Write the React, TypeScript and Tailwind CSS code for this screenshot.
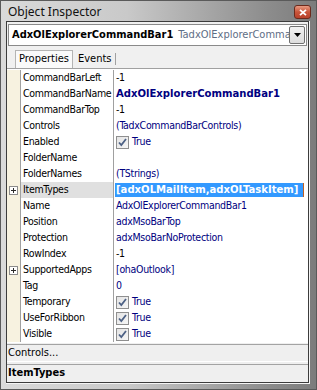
import React from "react";

type Row = {
  name: string;
  value?: string;
  color?: string;
  bold?: boolean;
  check?: boolean;
  plus?: boolean;
  selected?: boolean;
};

const NAVY = "#000080";

const rows: Row[] = [
  { name: "CommandBarLeft", value: "-1", color: "#000000" },
  { name: "CommandBarName", value: "AdxOlExplorerCommandBar1", color: NAVY, bold: true },
  { name: "CommandBarTop", value: "-1", color: "#000000" },
  { name: "Controls", value: "(TadxCommandBarControls)", color: NAVY },
  { name: "Enabled", check: true },
  { name: "FolderName", value: "" },
  { name: "FolderNames", value: "(TStrings)", color: NAVY },
  { name: "ItemTypes", value: "[adxOLMailItem,adxOLTaskItem]", plus: true, selected: true },
  { name: "Name", value: "AdxOlExplorerCommandBar1", color: NAVY },
  { name: "Position", value: "adxMsoBarTop", color: NAVY },
  { name: "Protection", value: "adxMsoBarNoProtection", color: NAVY },
  { name: "RowIndex", value: "-1", color: "#000000" },
  { name: "SupportedApps", value: "[ohaOutlook]", color: NAVY, plus: true },
  { name: "Tag", value: "0", color: NAVY },
  { name: "Temporary", check: true },
  { name: "UseForRibbon", check: true },
  { name: "Visible", check: true },
];

const FONT = { fontFamily: '"DejaVu Sans Condensed", "DejaVu Sans", sans-serif' };

function PlusBox() {
  return (
    <div className="w-[9px] h-[9px] border border-[#8c8c8c] bg-white flex items-center justify-center">
      <svg width="7" height="7" viewBox="0 0 7 7">
        <path d="M1 3.5h5M3.5 1v5" stroke="#2a2a2a" strokeWidth="1" shapeRendering="crispEdges" />
      </svg>
    </div>
  );
}

function CheckBox() {
  return (
    <div className="w-[13px] h-[13px] border border-[#8f8f8f] bg-[linear-gradient(135deg,#e4e4e4,#f6f6f6)] flex items-center justify-center">
      <svg width="11" height="11" viewBox="0 0 11 11">
        <path d="M2 5.5 L4.3 8 L9 2" fill="none" stroke="#4d6185" strokeWidth="1.8" />
      </svg>
    </div>
  );
}

function GridRow({ r }: { r: Row }) {
  return (
    <div className="flex h-[16px]">
      <div className="w-[14px] bg-[#f7f2e0] flex items-center justify-center border-r border-[#a0a0a0]">
        {r.plus ? <PlusBox /> : null}
      </div>
      <div
        className={
          "w-[93px] pl-[2px] flex items-center whitespace-nowrap overflow-hidden text-black border-r border-[#a0a0a0] " +
          (r.selected ? "bg-[#e0e0e0]" : "bg-white")
        }
      >
        {r.name}
      </div>
      <div className="flex-1 bg-white flex items-center pl-[1px] whitespace-nowrap overflow-hidden">
        {r.check ? (
          <div className="flex items-center gap-[3px] pl-[1px]">
            <CheckBox />
            <span style={{ color: NAVY }}>True</span>
          </div>
        ) : r.selected ? (
          <div className="flex items-center h-[14px] w-[189px] bg-[#3399ff] text-white font-bold text-[11.2px] tracking-normal pl-[1px] border-r border-[#c06020]">
            {r.value}
          </div>
        ) : (
          <span
            className={"pl-[1px] " + (r.bold ? "font-bold text-[11.2px] tracking-normal" : "")}
            style={{ color: r.color }}
          >
            {r.value}
          </span>
        )}
      </div>
    </div>
  );
}

export default function App() {
  return (
    <div className="w-[317px] h-[390px] border border-[#5a5a5a] bg-[linear-gradient(to_right,#dadada,#c9c9c9_40%,#8c8c8c_85%,#7c7c7c)] flex flex-col overflow-hidden">
      {/* title bar */}
      <div className="h-[21px] flex items-center justify-between pl-[7px] pr-[5px]">
        <span className="text-[12px] text-[#111] mt-[2px]" style={{ fontFamily: '"Noto Sans", sans-serif' }}>
          Object Inspector
        </span>
        <div className="w-[17px] h-[14px] mt-[2px] rounded-[3px] border border-[#6b2a1c] bg-[linear-gradient(#e79a82,#c9553a_50%,#b8412a)] flex items-center justify-center">
          <svg width="8" height="7" viewBox="0 0 8 7">
            <path d="M1 0.8 L7 6.2 M7 0.8 L1 6.2" stroke="#ffffff" strokeWidth="1.8" />
          </svg>
        </div>
      </div>

      {/* client area */}
      <div className="flex-1 ml-[5px] mr-[6px] mb-[6px] border-r border-b border-[#f4f4f4] flex flex-col">
        <div
          className="flex-1 border border-[#3c3c3c] bg-[#f0f0f0] flex flex-col text-[10.5px] tracking-[-0.3px]"
          style={FONT}
        >
          {/* combo */}
          <div className="mt-[2px] mx-[1px] h-[22px] border border-[#8a8a8a] bg-white flex items-center">
            <div className="flex-1 overflow-hidden whitespace-nowrap pl-[3px] text-[11px] tracking-normal">
              <span className="font-bold text-black">AdxOlExplorerCommandBar1</span>
              <span className="text-[#5e6d85] ml-[5px]">TadxOlExplorerComman</span>
            </div>
            <div className="w-[16px] h-[18px] mr-[1px] rounded-[2px] border border-[#707070] bg-[linear-gradient(#f2f2f2,#dcdcdc)] flex items-center justify-center">
              <svg width="7" height="4" viewBox="0 0 7 4">
                <path d="M0 0 H7 L3.5 4 Z" fill="#000" />
              </svg>
            </div>
          </div>

          {/* tabs */}
          <div className="h-[23px] flex items-end pl-[8px] border-b border-[#a0a0a0] text-[11px] tracking-normal">
            <div className="h-[18px] px-[3px] flex items-center bg-[#fafafa] border border-b-0 border-[#b4b4b4] text-black">
              Properties
            </div>
            <div className="h-[18px] flex items-center pl-[5px] pr-[4px] text-black">Events</div>
            <div className="w-px h-[12px] mb-[3px] bg-[#a0a0a0]" />
          </div>

          {/* grid */}
          <div className="border-t border-white flex flex-col border-b border-[#a0a0a0]">
            {rows.map((r) => (
              <GridRow key={r.name} r={r} />
            ))}
          </div>

          {/* bottom panels */}
          <div className="h-[18px] bg-[#efefef] flex flex-col">
            <div className="h-[3px]" />
            <div className="h-px bg-[#a3a3a3]" />
            <div className="flex-1 flex items-center pl-[1px] text-black text-[11px] tracking-normal">Controls...</div>
          </div>
          <div className="h-px bg-white" />
          <div className="flex-1 bg-[#efefef] flex flex-col">
            <div className="h-[2px]" />
            <div className="h-px bg-[#a3a3a3]" />
            <div className="flex-1 flex items-center pl-[1px] font-bold text-[11px] tracking-normal text-black">
              ItemTypes
            </div>
          </div>
        </div>
      </div>
    </div>
  );
}
